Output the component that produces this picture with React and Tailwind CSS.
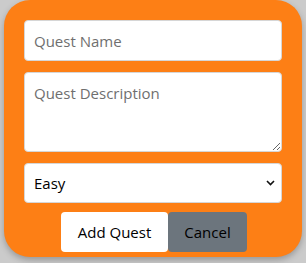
import React, { useState } from "react";

export default function App() {
  const [name, setName] = useState("");
  const [desc, setDesc] = useState("");
  const [level, setLevel] = useState("easy");

  return (
    <div className="w-[306px] h-[263px] bg-[#cbcbcb] font-['Open_Sans','Noto_Sans',sans-serif] overflow-hidden">
      <div className="mx-[4px] h-[257px] bg-[#fd7f15] rounded-[26px] px-[20px] pt-[20px] shadow-[0_3px_6px_rgba(0,0,0,0.25)]">
        <input
          type="text"
          value={name}
          onChange={e => setName(e.target.value)}
          placeholder="Quest Name"
          className="block w-full h-[41px] px-[9px] pt-[1px] bg-white border border-[#d6d6d6] rounded-[4px] text-[15px] text-black placeholder:text-[#6f6f6f] outline-none"
        />
        <textarea
          value={desc}
          onChange={e => setDesc(e.target.value)}
          placeholder="Quest Description"
          className="block w-full h-[80px] mt-[11px] px-[9px] pt-[10px] pb-[6px] bg-white border border-[#d6d6d6] rounded-[4px] text-[15px] leading-[20px] text-black placeholder:text-[#6f6f6f] outline-none resize-y"
        />
        <div className="relative mt-[11px]">
          <select
            value={level}
            onChange={e => setLevel(e.target.value)}
            className="block w-full h-[40px] pl-[9px] pr-[24px] bg-white border border-[#d6d6d6] rounded-[4px] text-[15px] text-black outline-none appearance-none"
          >
            <option value="easy">Easy</option>
            <option value="medium">Medium</option>
            <option value="hard">Hard</option>
          </select>
          <svg className="absolute right-[7px] top-[17px] pointer-events-none" width="9" height="6" viewBox="0 0 9 6">
            <path d="M1 1l3.5 3.5L8 1" fill="none" stroke="#111" strokeWidth="1.6" />
          </svg>
        </div>
        <div className="flex justify-center mt-[9px] pl-[2px]">
          <button className="h-[40px] w-[107px] bg-white rounded-[4px] text-[15px] text-black">Add Quest</button>
          <button className="h-[40px] w-[79px] bg-[#6c757d] rounded-[4px] text-[15px] text-black">Cancel</button>
        </div>
      </div>
    </div>
  );
}
